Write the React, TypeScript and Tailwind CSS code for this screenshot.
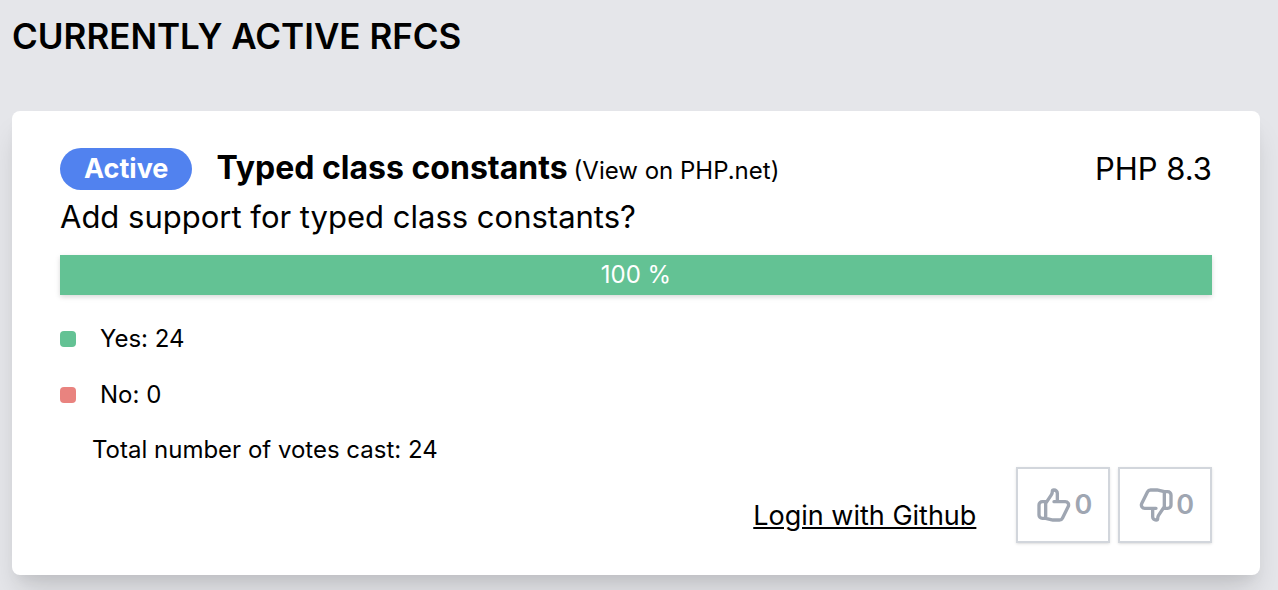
type VoteButtonProps = { label: string; path: string; count: number };

const thumbUp =
  "M14 10h4.764a2 2 0 011.789 2.894l-3.5 7A2 2 0 0115.263 21h-4.017c-.163 0-.326-.02-.485-.06L7 20m7-10V5a2 2 0 00-2-2h-.095c-.5 0-.905.405-.905.905 0 .714-.211 1.412-.608 2.006L7 11v9m7-10h-2M7 20H5a2 2 0 01-2-2v-6a2 2 0 012-2h2.5";
const thumbDown =
  "M10 14H5.236a2 2 0 01-1.789-2.894l3.5-7A2 2 0 018.736 3h4.018a2 2 0 01.485.06l3.76.94m-7 10v5a2 2 0 002 2h.096c.5 0 .905-.405.905-.904 0-.715.211-1.413.608-2.008L17 13V4m-7 10h2m5-10h2a2 2 0 012 2v6a2 2 0 01-2 2h-2.5";

function VoteButton({ label, path, count }: VoteButtonProps) {
  return (
    <button
      type="button"
      aria-label={`${label}: ${count}`}
      className="flex items-center border-2 border-[#d2d6dc] bg-white p-4 text-[27px] leading-10 font-semibold text-[#9fa6b2] shadow-sm"
    >
      <svg className="size-10" viewBox="0 0 24 24" fill="none" stroke="currentColor" strokeWidth="2" strokeLinecap="round" strokeLinejoin="round" aria-hidden="true">
        <path d={path} />
      </svg>
      {count}
    </button>
  );
}

export default function App() {
  return (
    <main className="min-h-screen overflow-hidden bg-[#e5e6ea] pt-3 pr-[18px] pb-3 pl-3 font-['Inter',sans-serif] text-black">
      <h1 className="text-[35px] leading-[48px] font-semibold uppercase">Currently active RFCs</h1>
      <article className="mt-[51px] rounded-lg bg-white px-12 pt-[37px] pb-8 shadow-[0_20px_30px_-6px_rgba(0,0,0,0.14),0_8px_12px_-4px_rgba(0,0,0,0.05)]">
        <header className="flex items-center leading-[42px]">
          <span className="rounded-full bg-[#5182ef] px-6 text-[27px] font-bold text-white">Active</span>
          <div className="ml-6 flex items-baseline gap-1.5 leading-[38px]">
            <h2 className="text-[32px] font-bold">Typed class constants</h2>
            <a href="#rfc" className="text-[24px]">(View on PHP.net)</a>
          </div>
          <span className="ml-auto text-[31px] leading-[38px]">PHP 8.3</span>
        </header>
        <p className="mt-1 text-[31px] leading-[45px]">Add support for typed class constants?</p>
        <div className="mt-4 bg-[#63c294] text-center text-[24px] leading-10 text-white shadow-[0_2px_6px_rgba(0,0,0,0.1),0_2px_4px_rgba(0,0,0,0.06)]">100 %</div>
        <ul className="mt-6 text-[24px] leading-10">
          <li className="flex items-center gap-6">
            <span className="size-4 rounded bg-[#63c294]" />
            Yes: 24
          </li>
          <li className="mt-4 flex items-center gap-6">
            <span className="size-4 rounded bg-[#e9837f]" />
            No: 0
          </li>
        </ul>
        <p className="mt-[18px] ml-8 text-[24px] leading-[34px]">Total number of votes cast: 24</p>
        <footer className="flex items-end justify-end gap-2">
          <a href="#login" className="mr-8 pb-[7px] text-[27px] leading-10 underline">Login with Github</a>
          <VoteButton label="Thumbs up" path={thumbUp} count={0} />
          <VoteButton label="Thumbs down" path={thumbDown} count={0} />
        </footer>
      </article>
    </main>
  );
}
